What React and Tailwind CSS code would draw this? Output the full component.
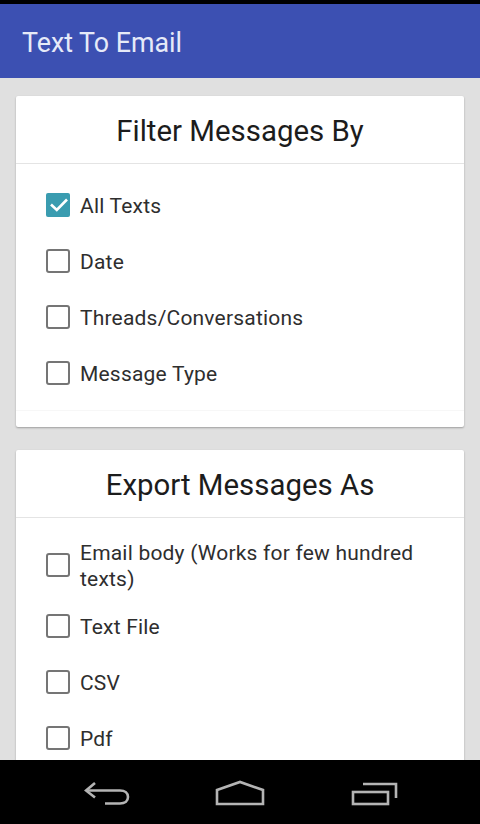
// Text To Email 화면

import React from 'react';

const filterOptions = ['All Texts', 'Date', 'Threads/Conversations', 'Message Type'];
const exportOptions = ['Email body (Works for few hundred texts)', 'Text File', 'CSV', 'Pdf'];

const CheckBox = ({ checked }) => {
  if (checked) {
    return (
      <span className="flex w-6 h-6 shrink-0 items-center justify-center rounded-[2px] bg-[#3a9cb0]">
        <svg width="24" height="24" viewBox="0 0 24 24" fill="none">
          <path d="M5 11.5l5.8 5.5L21 6.5" stroke="#ffffff" strokeWidth="2.6" />
        </svg>
      </span>
    );
  }
  return <span className="block w-6 h-6 shrink-0 rounded-[3px] border-2 border-[#757575] bg-white"></span>;
};

const OptionRow = ({ label, checked }) => (
  <div className="flex items-center gap-[10px] min-h-[56px] py-[6px] pl-[30px] pr-[40px]">
    <CheckBox checked={checked} />
    <span className="pt-[2px] text-[21px] leading-[26px] tracking-[0.2px] text-[#2e2e2e]">{label}</span>
  </div>
);

const Card = ({ title, children }) => (
  <div className="bg-white rounded-[2px] shadow-[0_1px_2px_rgba(0,0,0,0.3)]">
    <div className="flex h-[68px] items-center justify-center pt-1 border-b border-[#e4e4e4]">
      <h2 className="text-[29.4px] leading-none text-[#1c1c1c]">{title}</h2>
    </div>
    {children}
  </div>
);

const App = () => {
  return (
    <div className="flex flex-col h-[824px] overflow-hidden bg-[#e0e0e0] font-['Roboto',sans-serif]">
      {/* Status bar */}
      <div className="h-1 shrink-0 bg-black"></div>

      {/* App bar */}
      <header className="flex h-[74px] shrink-0 items-center pl-[22px] pt-1 bg-[#3c50b2]">
        <h1 className="text-[26.8px] text-[#e6eaf8]">Text To Email</h1>
      </header>

      {/* Content */}
      <main className="flex-1 min-h-0 overflow-hidden px-4 pt-[18px]">
        <Card title="Filter Messages By">
          <div className="pt-[13px] pb-[9px] border-b border-[#f7f7f7]">
            {filterOptions.map((label, i) => (
              <OptionRow key={label} label={label} checked={i === 0} />
            ))}
          </div>
          <div className="h-4"></div>
        </Card>
        <div className="h-[23px]"></div>
        <Card title="Export Messages As">
          <div className="pt-[14px]">
            {exportOptions.map((label) => (
              <OptionRow key={label} label={label} />
            ))}
          </div>
        </Card>
      </main>

      {/* Nav bar */}
      <nav className="relative flex h-[64px] shrink-0 items-center justify-between pl-[84px] pr-[82px] bg-black">
        <svg width="46" height="28" viewBox="0 0 46 28" fill="none" stroke="#b4b4b4" strokeWidth="2.6">
          <path d="M11 5l-9 7.5 9 7" />
          <path d="M2 12.5h34c5 0 8 2.5 8 6.500s-3 6.500-8 6.500H21" />
        </svg>
        <svg width="50" height="28" viewBox="0 0 50 28" fill="none" stroke="#b4b4b4" strokeWidth="2.6">
          <path d="M2 12L25 4l23 8V26H2z" />
        </svg>
        <svg width="48" height="28" viewBox="0 0 48 28" fill="none" stroke="#b4b4b4" strokeWidth="2.6">
          <rect x="3" y="14" width="35" height="12" />
          <path d="M13 6h33v14" />
        </svg>
      </nav>
    </div>
  );
};

export default App;
